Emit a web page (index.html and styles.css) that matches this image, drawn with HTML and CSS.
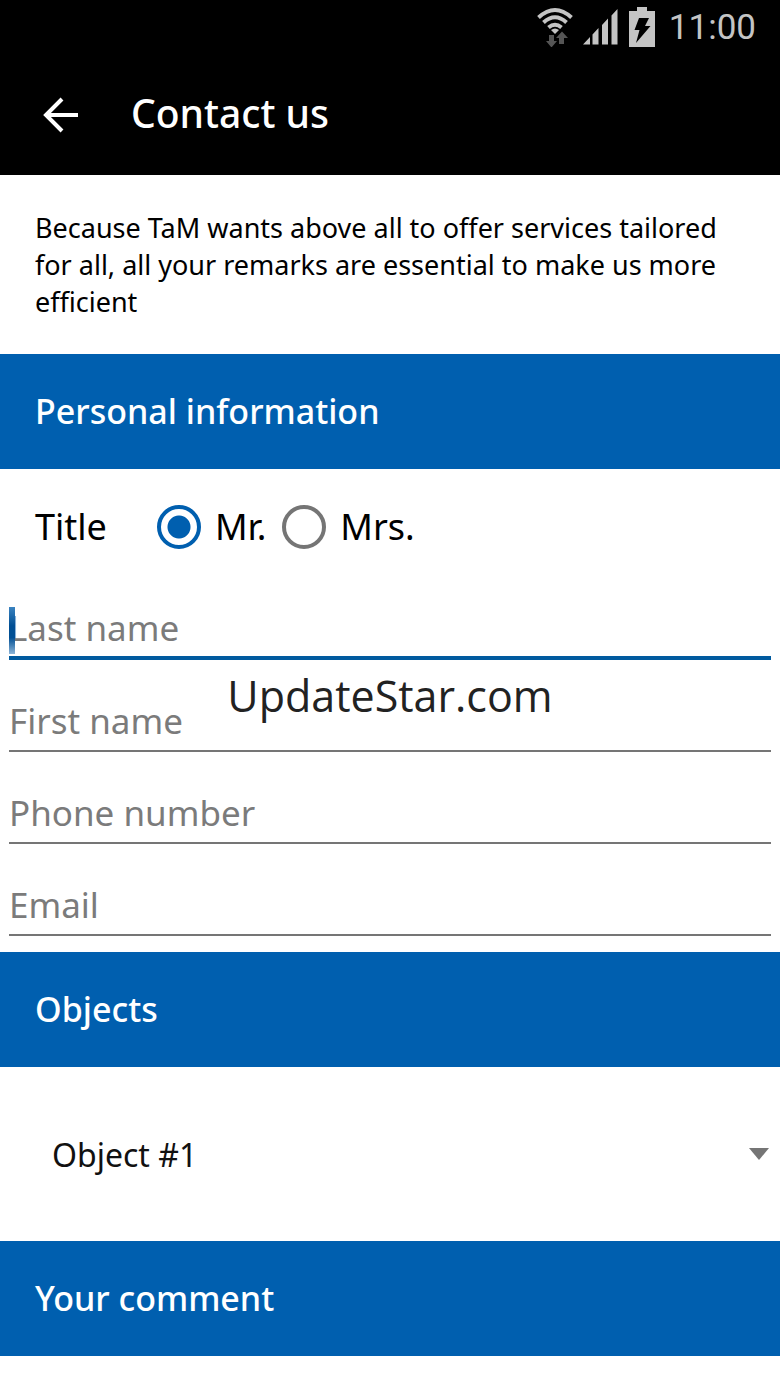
FILE: index.html
```
<!DOCTYPE html>
<html lang="en">
<head>
    <meta charset="UTF-8">
    <meta name="viewport" content="width=device-width, initial-scale=1.0">
    <title>Contact us</title>
    <link rel="stylesheet" href="styles.css">
</head>
<body>
    <header class="header">
        <div class="status-bar">
            <svg class="wifi" width="36" height="40" viewBox="0 0 36 40" aria-hidden="true">
                <g fill="none" stroke="#c4c4c4" stroke-width="4">
                    <path d="M1.500 10.500Q18 -4.500 34.500 10.500"/>
                    <path d="M6.500 15.500Q18 5 29.500 15.500"/>
                    <path d="M11.500 20.500Q18 15 24.500 20.500"/>
                </g>
                <path fill="#c4c4c4" d="M14 23Q18 20 22 23L18 27Z"/>
                <path fill="#555" d="M12 28h5v6h3l-5.500 6.500L9 34h3zM22 37v-6h-3l6-6.500 6 6.500h-4v6z"/>
            </svg>
            <svg class="signal" width="36" height="36" viewBox="0 0 36 36" aria-hidden="true">
                <path fill="#c4c4c4" d="M0 35.500L7 28v7.500zM9.500 25.500L15.500 19v16.500h-6zM19 16l6-6.500v26h-6zM28.500 6.500l6-6.500v35.500h-6z"/>
            </svg>
            <svg class="battery" width="26" height="40" viewBox="0 0 26 40" aria-hidden="true">
                <path fill="#c4c4c4" d="M8 0h10v4h8v36H0V4h8z"/>
                <path fill="#000" d="M10 11h10l-4 8h5.500L7 36l3.500-13H5.500z"/>
            </svg>
            <span class="clock">11:00</span>
        </div>
        <div class="app-bar">
            <a href="#" class="back" aria-label="Back">
                <svg width="36" height="36" viewBox="0 0 36 36" aria-hidden="true">
                    <path fill="none" stroke="#fff" stroke-width="4" d="M35 18H4M19 2L3 18l16 16"/>
                </svg>
            </a>
            <h1>Contact us</h1>
        </div>
    </header>

    <p class="intro">Because TaM wants above all to offer services tailored for all, all your remarks are essential to make us more efficient</p>

    <form>
        <h2>Personal information</h2>
        <div class="title-row" role="radiogroup" aria-labelledby="title-label">
            <span class="title-label" id="title-label">Title</span>
            <label><input type="radio" name="title" checked>Mr.</label>
            <label><input type="radio" name="title">Mrs.</label>
        </div>
        <div class="fields">
            <input class="active" type="text" placeholder="Last name" aria-label="Last name">
            <input type="text" placeholder="First name" aria-label="First name">
            <input type="tel" placeholder="Phone number" aria-label="Phone number">
            <input type="email" placeholder="Email" aria-label="Email">
            <span class="caret"></span>
            <span class="watermark">UpdateStar.com</span>
        </div>

        <h2>Objects</h2>
        <div class="object">
            <select aria-label="Object">
                <option>Object #1</option>
            </select>
            <svg width="20" height="12" viewBox="0 0 20 12" aria-hidden="true">
                <path fill="#757575" d="M0 0h20L10 12z"/>
            </svg>
        </div>

        <h2>Your comment</h2>
    </form>
</body>
</html>
```

FILE: styles.css
```
* {
    box-sizing: border-box;
}

body {
    margin: 0;
    font-family: "Noto Sans", sans-serif;
    background-color: #fff;
    color: #000;
}

.header {
    background-color: #000;
    color: #fff;
}

.status-bar {
    display: flex;
    justify-content: flex-end;
    align-items: center;
    height: 54px;
    padding-right: 24px;
}

.signal {
    margin: 0 10px;
}

.clock {
    margin-left: 14px;
    font-family: Roboto, sans-serif;
    font-size: 35px;
    color: #c4c4c4;
}

.app-bar {
    display: flex;
    align-items: center;
    height: 121px;
    padding-left: 43px;
}

.back {
    display: flex;
    margin-right: 52px;
}

h1 {
    margin: 0;
    font-size: 39px;
    font-weight: 500;
    line-height: 40px;
    padding-bottom: 4px;
}

.intro {
    margin: 0;
    padding: 34px 35px;
    font-size: 27px;
    line-height: 37px;
}

h2 {
    margin: 0;
    padding: 0 35px;
    font-size: 34px;
    font-weight: 500;
    line-height: 115px;
    background-color: #005faf;
    color: #fff;
}

.title-row {
    display: flex;
    align-items: center;
    height: 115px;
    padding-left: 35px;
    font-size: 36px;
}

.title-label {
    margin-right: 50px;
}

.title-row label {
    display: flex;
    align-items: center;
    margin-right: 16px;
}

input[type="radio"] {
    appearance: none;
    width: 44px;
    height: 44px;
    margin: 0 14px 0 0;
    border: 4px solid #757575;
    border-radius: 50%;
}

input[type="radio"]:checked {
    border-color: #005faf;
    background: radial-gradient(#005faf 11px, #fff 12px);
}

.fields {
    position: relative;
    display: flex;
    flex-direction: column;
    gap: 16px;
    padding: 0 9px 16px;
}

.fields input {
    width: 100%;
    height: 76px;
    padding: 14px 0 0;
    border: none;
    border-bottom: 2px solid #757575;
    outline: none;
    background: none;
    font: inherit;
    font-size: 35px;
}

.fields input::placeholder {
    color: #7b7b7b;
    opacity: 1;
}

.fields .active {
    border-bottom: 4px solid #005a9f;
}

/* Text cursor in the active field */
.caret {
    position: absolute;
    top: 23px;
    left: 9px;
    width: 6px;
    height: 47px;
    background: linear-gradient(#3a83c0, #004f94 40%, #004f94 65%, #8db5d8);
}

.watermark {
    position: absolute;
    top: 82px;
    left: 0;
    width: 100%;
    font-family: "Open Sans", sans-serif;
    font-size: 43px;
    line-height: 60px;
    text-align: center;
    color: #222;
    pointer-events: none;
}

.object {
    display: flex;
    align-items: center;
    height: 174px;
    padding-right: 11px;
}

.object select {
    flex: 1;
    appearance: none;
    padding: 0 0 0 52px;
    border: none;
    background: none;
    font: inherit;
    font-size: 32px;
    color: #111;
}
```
